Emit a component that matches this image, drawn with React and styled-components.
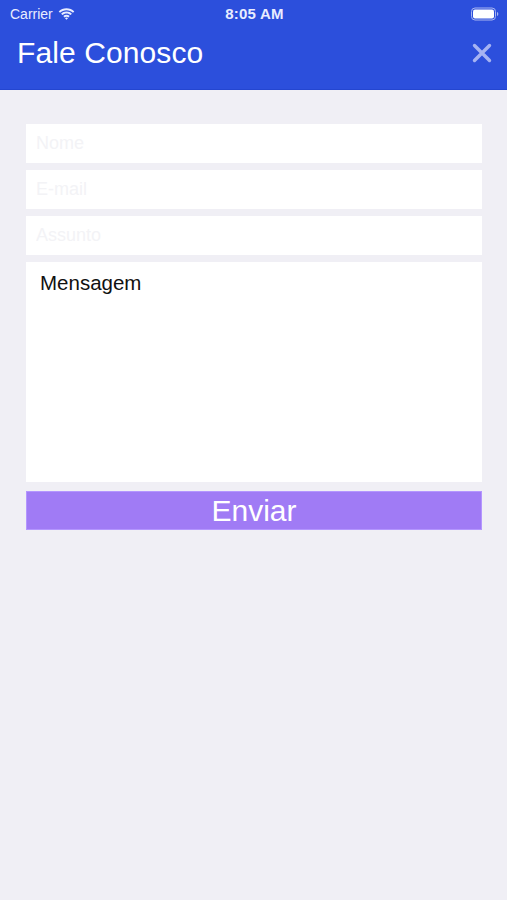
import React from "react";
import styled, { createGlobalStyle } from "styled-components";

const Global = createGlobalStyle`
  html, body { margin: 0; padding: 0; background: #f0eff5; }
  body { font-family: "Liberation Sans", Arial, sans-serif; }
  * { box-sizing: border-box; }
`;

const Screen = styled.div`
  width: 507px;
  height: 900px;
  background: #f0eff5;
  display: flex;
  flex-direction: column;
`;

const Header = styled.header`
  background: #2c4fdc;
  height: 90px;
  border-bottom: 1px solid #2446d0;
  display: flex;
  flex-direction: column;
`;

const StatusBar = styled.div`
  height: 27px;
  display: grid;
  grid-template-columns: 1fr auto 1fr;
  align-items: center;
  padding: 0 8px 0 10px;
  color: #e8ecff;
`;

const Carrier = styled.div`
  display: flex;
  align-items: center;
  gap: 5px;
  font-size: 14px;
`;

const Clock = styled.div`
  font-size: 15px;
  font-weight: bold;
  letter-spacing: 0.2px;
`;

const Battery = styled.div`
  justify-self: end;
  display: flex;
  align-items: center;
`;

const NavBar = styled.div`
  flex: 1;
  display: flex;
  align-items: center;
  justify-content: space-between;
  padding: 0 13px 10px 17px;
`;

const Title = styled.h1`
  margin: 0;
  font-weight: normal;
  font-size: 30px;
  color: #ffffff;
  letter-spacing: 0.1px;
`;

const CloseButton = styled.button`
  border: 0;
  background: transparent;
  padding: 0;
  width: 24px;
  height: 24px;
  display: flex;
  align-items: center;
  justify-content: center;
`;

const Form = styled.form`
  display: flex;
  flex-direction: column;
  gap: 7px;
  padding: 34px 25px 0 26px;
`;

const Field = styled.input`
  height: 39px;
  border: 0;
  background: #ffffff;
  padding: 0 10px;
  font-family: inherit;
  font-size: 18px;
  color: #000;
  outline: none;
  &::placeholder { color: #f3f3f6; }
`;

const Message = styled.textarea`
  height: 220px;
  border: 0;
  background: #ffffff;
  padding: 9px 14px;
  font-family: inherit;
  font-size: 20.5px;
  resize: none;
  outline: none;
  &::placeholder { color: #111; }
`;

const Submit = styled.button`
  margin-top: 2px;
  height: 39px;
  border: 1px solid #b496ff;
  background: #a07bf5;
  color: #ffffff;
  font-family: inherit;
  font-size: 30px;
  padding: 0;
  line-height: 37px;
`;

export default function App() {
  return (
    <Screen>
      <Global />
      <Header>
        <StatusBar>
          <Carrier>
            Carrier
            <svg width="17" height="12" viewBox="0 0 17 12">
              <path d="M8.5 2.2c2.5 0 4.8 1 6.5 2.6l1.3-1.4C14.3 1.5 11.5.3 8.5.3S2.7 1.5.7 3.4L2 4.8c1.7-1.6 4-2.6 6.5-2.6z" fill="#e8ecff" />
              <path d="M8.5 5.5c1.6 0 3 .6 4.1 1.6l1.3-1.4C12.5 4.4 10.6 3.6 8.5 3.6S4.5 4.4 3.1 5.7l1.3 1.4c1.1-1 2.5-1.6 4.1-1.6z" fill="#e8ecff" />
              <path d="M8.5 8.7c.8 0 1.4.3 1.9.7l1.3-1.4c-.9-.8-2-1.2-3.2-1.2S6.2 7.2 5.3 8l1.3 1.4c.5-.4 1.1-.7 1.9-.7zM8.5 11.8l1.5-1.6c-.4-.4-.9-.6-1.5-.6s-1.1.2-1.5.6z" fill="#e8ecff" />
            </svg>
          </Carrier>
          <Clock>8:05 AM</Clock>
          <Battery>
            <svg width="28" height="14" viewBox="0 0 28 14">
              <rect x="0.5" y="1" width="24" height="12" rx="3.5" fill="none" stroke="#a9b6f0" strokeWidth="1" />
              <rect x="2" y="2.5" width="21" height="9" rx="2" fill="#ffffff" />
              <path d="M26 5v4c.8-.3 1.3-1.1 1.3-2S26.8 5.3 26 5z" fill="#a9b6f0" />
            </svg>
          </Battery>
        </StatusBar>
        <NavBar>
          <Title>Fale Conosco</Title>
          <CloseButton type="button" aria-label="Fechar">
            <svg width="20" height="20" viewBox="0 0 20 20">
              <path d="M2.5 2.5L17.5 17.5M17.5 2.5L2.5 17.5" stroke="#a6b3f2" strokeWidth="3.4" strokeLinecap="round" />
            </svg>
          </CloseButton>
        </NavBar>
      </Header>
      <Form onSubmit={(e) => e.preventDefault()}>
        <Field placeholder="Nome" />
        <Field placeholder="E-mail" />
        <Field placeholder="Assunto" />
        <Message placeholder="Mensagem" />
        <Submit type="submit">Enviar</Submit>
      </Form>
    </Screen>
  );
}
